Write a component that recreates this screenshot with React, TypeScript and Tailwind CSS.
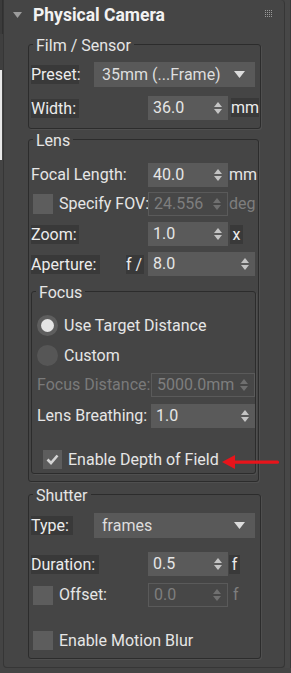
import React from "react";

const Arrows = ({ dim }: { dim?: boolean }) => (
  <svg width="8" height="14" viewBox="0 0 8 14" className="ml-auto shrink-0">
    <polygon points="0,6 4,1 8,6" fill={dim ? "#707070" : "#c4c4c4"} />
    <polygon points="0,8 4,13 8,8" fill={dim ? "#707070" : "#c4c4c4"} />
  </svg>
);

const Spinner = ({ value, w, dim }: { value: string; w: string; dim?: boolean }) => (
  <div
    className={`flex items-center h-[24px] pl-[5px] pr-[6px] ${w} ${
      dim ? "bg-[#474747] border border-[#5a5a5a] text-[#7e7e7e]" : "bg-[#5a5a5a] text-[#e6e6e6]"
    }`}
  >
    <span className="leading-[24px]">{value}</span>
    <Arrows dim={dim} />
  </div>
);

const Dropdown = ({ value }: { value: string }) => (
  <div className="flex items-center h-[25px] w-[161px] ml-[15px] bg-[#595959] pl-[8px] pr-[10px] text-[#dedede]">
    <span>{value}</span>
    <svg width="11" height="7" viewBox="0 0 11 7" className="ml-auto">
      <polygon points="0,0 11,0 5.5,7" fill="#dcdcdc" />
    </svg>
  </div>
);

const DLabel = ({ children, w }: { children: React.ReactNode; w: string }) => (
  <span className={`h-[19px] leading-[19px] bg-[#393939] text-[#ececec] whitespace-nowrap ${w}`}>{children}</span>
);

const Check = ({ checked, size }: { checked?: boolean; size: string }) => (
  <div className={`${size} bg-[#5d5d5d] flex items-center justify-center shrink-0`}>
    {checked && (
      <svg width="13" height="11" viewBox="0 0 13 11">
        <path d="M1.5 5.5 L5 9 L11.5 1.5" stroke="#d4d4d4" strokeWidth="2.6" fill="none" />
      </svg>
    )}
  </div>
);

const Radio = ({ on }: { on?: boolean }) => (
  <div
    className={`w-[21px] h-[21px] rounded-full flex items-center justify-center shrink-0 ${
      on ? "bg-[#5e5e5e]" : "bg-[#565656]"
    }`}
  >
    {on && <div className="w-[13px] h-[13px] rounded-full bg-[#e4e4e4]" />}
  </div>
);

const Legend = ({ children }: { children: React.ReactNode }) => (
  <legend className="ml-[4px] px-[3px] h-[18px] leading-[21px] text-[#e6e6e6]">{children}</legend>
);

export default function App() {
  return (
    <div className="relative flex w-[291px] h-[673px] bg-[#444444] overflow-hidden text-[16px] text-[#e6e6e6] [font-family:Roboto,'Liberation_Sans',sans-serif]">
      {/* left strip */}
      <div className="w-[3px] flex flex-col shrink-0">
        <div className="h-[34px] bg-[#3b3b3b] border-r border-[#303030]" />
        <div className="h-[36px] bg-[#3f3f3f]" />
        <div className="h-[90px] w-[2px] bg-[#e8e8e8]" />
      </div>

      {/* panel */}
      <div className="w-[282px] h-[668px] shrink-0 flex flex-col bg-[#454545] border-l border-r border-b border-[#363636] rounded-b-[4px] rounded-tr-[4px] pl-[24px]">
        {/* header */}
        <div className="h-[35px] flex items-start -ml-[24px]">
          <svg width="9" height="6" viewBox="0 0 9 6" className="ml-[9px] mt-[12px]">
            <polygon points="0,0 9,0 4.5,6" fill="#9c9c9c" />
          </svg>
          <span className="ml-[11px] mt-[4px] text-[17.5px] font-bold leading-[22px] text-[#f2f2f2]">Physical Camera</span>
          <div className="ml-auto mr-[12px] mt-[10px] grid grid-cols-4 gap-[1px]">
            {Array.from({ length: 16 }).map((_, i) => (
              <div key={i} className="w-[1px] h-[1px] bg-[#9a9a9a]" />
            ))}
          </div>
        </div>

        {/* Film / Sensor */}
        <fieldset className="w-[233px] border border-[#2c2c2c] rounded-[3px] pt-[9px] pb-[8px] shadow-[1px_1px_0_#4f4f4f]">
          <Legend>Film / Sensor</Legend>
          <div className="flex items-center h-[25px] pl-[2px]">
            <DLabel w="w-[48px]">Preset:</DLabel>
            <Dropdown value="35mm (...Frame)" />
          </div>
          <div className="flex items-center h-[24px] mt-[9px] pl-[2px]">
            <DLabel w="w-[48px]">Width:</DLabel>
            <div className="ml-[69px]">
              <Spinner value="36.0" w="w-[80px]" />
            </div>
            <span className="ml-[3px]">
              <DLabel w="w-[27px]">mm</DLabel>
            </span>
          </div>
        </fieldset>

        {/* Lens */}
        <fieldset className="mt-[1px] w-[231px] border border-[#2c2c2c] rounded-[3px] pt-[15px] pb-[7px] shadow-[1px_1px_0_#4f4f4f]">
          <Legend>Lens</Legend>
          <div className="flex items-center h-[24px]">
            <span className="w-[119px] pl-[2px]">Focal Length:</span>
            <Spinner value="40.0" w="w-[80px]" />
            <span className="ml-[1px]">mm</span>
          </div>
          <div className="flex items-center h-[24px] mt-[5px]">
            <div className="w-[119px] flex items-center pl-[4px]">
              <Check size="w-[20px] h-[20px]" />
              <span className="ml-[6px] whitespace-nowrap">Specify FOV:</span>
            </div>
            <Spinner value="24.556" w="w-[80px]" dim />
            <span className="ml-[1px] text-[#7e7e7e]">deg</span>
          </div>
          <div className="flex items-center h-[24px] mt-[6px]">
            <div className="w-[119px] pl-[2px] flex">
              <DLabel w="w-[48px]">Zoom:</DLabel>
            </div>
            <Spinner value="1.0" w="w-[80px]" />
            <span className="ml-[2px]">
              <DLabel w="w-[13px] text-center block">x</DLabel>
            </span>
          </div>
          <div className="flex items-center h-[24px] mt-[6px]">
            <div className="w-[119px] pl-[2px] flex">
              <DLabel w="w-[69px]">Aperture:</DLabel>
              <span className="ml-[26px]">
                <DLabel w="w-[18px] block">f /</DLabel>
              </span>
            </div>
            <Spinner value="8.0" w="w-[107px]" />
          </div>

          {/* Focus */}
          <fieldset className="mt-[6px] ml-[2px] w-[222px] border border-[#2c2c2c] rounded-[3px] pt-[15px] pb-[4px] shadow-[1px_1px_0_#4f4f4f]">
            <Legend>Focus</Legend>
            <div className="flex items-center h-[21px] pl-[5px]">
              <Radio on />
              <span className="ml-[6px]">Use Target Distance</span>
            </div>
            <div className="flex items-center h-[21px] mt-[9px] pl-[5px]">
              <Radio />
              <span className="ml-[6px]">Custom</span>
            </div>
            <div className="flex items-center h-[24px] mt-[7px]">
              <span className="w-[119px] pl-[5px] text-[#7a7a7a] whitespace-nowrap">Focus Distance:</span>
              <Spinner value="5000.0mm" w="w-[104px]" dim />
            </div>
            <div className="flex items-center h-[24px] mt-[7px]">
              <span className="w-[119px] pl-[5px] whitespace-nowrap">Lens Breathing:</span>
              <Spinner value="1.0" w="w-[104px]" />
            </div>
            <div className="flex items-center h-[19px] mt-[22px] pl-[11px]">
              <Check checked size="w-[19px] h-[19px]" />
              <span className="ml-[6px] whitespace-nowrap">Enable Depth of Field</span>
            </div>
          </fieldset>
        </fieldset>

        {/* Shutter */}
        <fieldset className="mt-[3px] w-[233px] border border-[#2c2c2c] rounded-[3px] pt-[10px] pb-[8px] shadow-[1px_1px_0_#4f4f4f]">
          <Legend>Shutter</Legend>
          <div className="flex items-center h-[25px] pl-[2px]">
            <DLabel w="w-[42px]">Type:</DLabel>
            <div className="ml-[6px]">
              <Dropdown value="frames" />
            </div>
          </div>
          <div className="flex items-center h-[24px] mt-[14px]">
            <div className="w-[119px] pl-[2px] flex">
              <DLabel w="w-[68px]">Duration:</DLabel>
            </div>
            <Spinner value="0.5" w="w-[80px]" />
            <span className="ml-[1px]">
              <DLabel w="w-[11px] text-center block">f</DLabel>
            </span>
          </div>
          <div className="flex items-center h-[24px] mt-[7px]">
            <div className="w-[119px] flex items-center pl-[4px]">
              <Check size="w-[20px] h-[19px]" />
              <span className="ml-[6px]">Offset:</span>
            </div>
            <Spinner value="0.0" w="w-[80px]" dim />
            <span className="ml-[5px] text-[#7e7e7e]">f</span>
          </div>
          <div className="flex items-center h-[19px] mt-[24px] pl-[4px]">
            <Check size="w-[20px] h-[19px]" />
            <span className="ml-[6px]">Enable Motion Blur</span>
          </div>
        </fieldset>
      </div>

      {/* right strip */}
      <div className="w-[6px] h-[668px] shrink-0 border-r border-[#3a3a3a] bg-[#474747]" />

      {/* red annotation arrow */}
      <svg className="absolute left-[220px] top-[453px]" width="62" height="18" viewBox="0 0 62 18">
        <polygon points="2,9 15,2 15,16" fill="#e8141b" />
        <rect x="13" y="7.5" width="46" height="3.2" rx="1.5" fill="#e8141b" />
      </svg>
    </div>
  );
}
